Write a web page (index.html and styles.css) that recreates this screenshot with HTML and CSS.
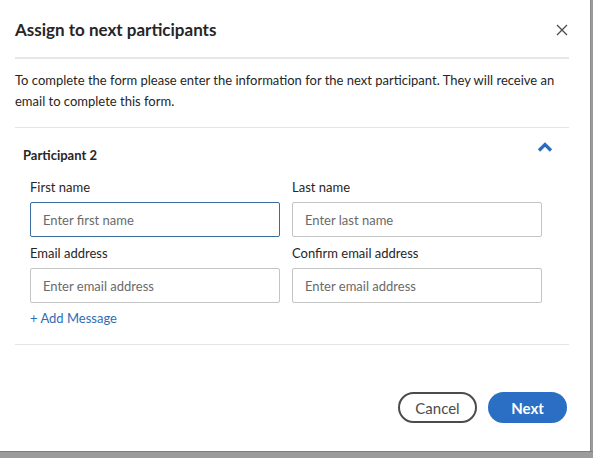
FILE: index.html
```html
<!DOCTYPE html>
<html lang="en">
<head>
<meta charset="utf-8">
<title>Assign to next participants</title>
<link rel="stylesheet" href="styles.css">
</head>
<body>
<div class="screen">
  <div class="dialog">
    <header class="dlg-head">
      <h1 class="dlg-title">Assign to next participants</h1>
      <button class="close" aria-label="Close">
        <svg width="12" height="12" viewBox="0 0 12 12"><path d="M1 1L11 11M11 1L1 11" stroke="#4b4b4b" stroke-width="1.3" fill="none"/></svg>
      </button>
    </header>
    <div class="intro">To complete the form please enter the information for the next participant. They will receive an email to complete this form.</div>
    <section class="participant">
      <div class="p-head">
        <h2 class="p-title">Participant 2</h2>
        <svg class="chev" width="16" height="10" viewBox="0 0 16 10"><path d="M2 8.5L8 2.5L14 8.5" stroke="#2a6dc0" stroke-width="3.2" fill="none" stroke-linejoin="miter"/></svg>
      </div>
      <div class="fields">
        <div class="field">
          <label class="lbl">First name</label>
          <input class="inp focused" type="text" placeholder="Enter first name">
        </div>
        <div class="field">
          <label class="lbl">Last name</label>
          <input class="inp" type="text" placeholder="Enter last name">
        </div>
        <div class="field">
          <label class="lbl">Email address</label>
          <input class="inp" type="text" placeholder="Enter email address">
        </div>
        <div class="field">
          <label class="lbl">Confirm email address</label>
          <input class="inp" type="text" placeholder="Enter email address">
        </div>
      </div>
      <a class="add-msg" href="#">+ Add Message</a>
    </section>
    <footer class="actions">
      <button class="btn btn-cancel">Cancel</button>
      <button class="btn btn-next">Next</button>
    </footer>
  </div>
  <div class="taskbar"></div>
</div>
</body>
</html>
```

FILE: styles.css
```css
* { box-sizing: border-box; }
html, body { margin: 0; padding: 0; }
body {
  font-family: Lato, "Liberation Sans", sans-serif;
  color: #262626;
  background: #9b9b9b;
  width: 593px;
  height: 458px;
  overflow: hidden;
}
.screen {
  display: flex;
  flex-direction: column;
  height: 458px;
}
.dialog {
  width: 591px;
  height: 451px;
  background: #fff;
  border-right: 1px solid #8c8c8c;
  padding: 0 21px 0 15px;
  display: flex;
  flex-direction: column;
}
.taskbar {
  flex: 1;
  background: #9b9b9b;
  border-top: 1px solid #7d7d7d;
}
.dlg-head {
  display: flex;
  align-items: center;
  justify-content: space-between;
  padding: 20px 0 17px;
  border-bottom: 2px solid #e6e6e6;
}
.dlg-title {
  margin: 0;
  font-size: 17px;
  line-height: 20px;
  font-weight: 700;
  color: #262626;
}
.close {
  border: 0;
  background: none;
  padding: 0;
  margin-right: 1px;
  width: 12px;
  height: 12px;
  display: flex;
}
.intro {
  padding: 11px 0 15px;
  font-size: 13px;
  line-height: 21px;
  color: #262626;
  border-bottom: 1px solid #e6e6e6;
}
.participant {
  padding: 0 16px 17px 8px;
  border-bottom: 1px solid #e6e6e6;
}
.p-head {
  display: flex;
  justify-content: space-between;
  align-items: flex-start;
  margin-top: 17px;
}
.p-title {
  margin: 0;
  font-size: 13px;
  line-height: 20px;
  font-weight: 700;
  color: #262626;
}
.chev { margin-top: -3px; }
.fields {
  margin-left: 7px;
  display: grid;
  grid-template-columns: 250px 250px;
  column-gap: 12px;
  row-gap: 7px;
  margin-top: 13px;
}
.field {
  display: flex;
  flex-direction: column;
}
.lbl {
  font-size: 13px;
  line-height: 18px;
  color: #262626;
}
.inp {
  margin-top: 6px;
  height: 35px;
  border: 1px solid #c4c4c4;
  border-radius: 2px;
  padding: 0 12px;
  font-family: Lato, "Liberation Sans", sans-serif;
  font-size: 13px;
  color: #262626;
  background: #fff;
  outline: none;
}
.inp::placeholder { color: #6a6a6a; }
.inp.focused { border-color: #3a6d9e; }
.add-msg {
  display: block;
  margin: 6px 0 0 7px;
  font-size: 13px;
  line-height: 18px;
  color: #2f6db5;
  text-decoration: none;
}
.actions {
  display: flex;
  justify-content: flex-end;
  gap: 11px;
  margin-top: 47px;
  padding-right: 2px;
}
.btn {
  width: 79px;
  height: 31px;
  border-radius: 16px;
  font-family: Lato, "Liberation Sans", sans-serif;
  font-size: 15px;
  padding: 0;
}
.btn-cancel {
  background: #fff;
  border: 2px solid #4b4b4b;
  color: #4b4b4b;
}
.btn-next {
  background: #2b6fc4;
  border: 0;
  color: #fff;
  font-weight: 700;
}
```
